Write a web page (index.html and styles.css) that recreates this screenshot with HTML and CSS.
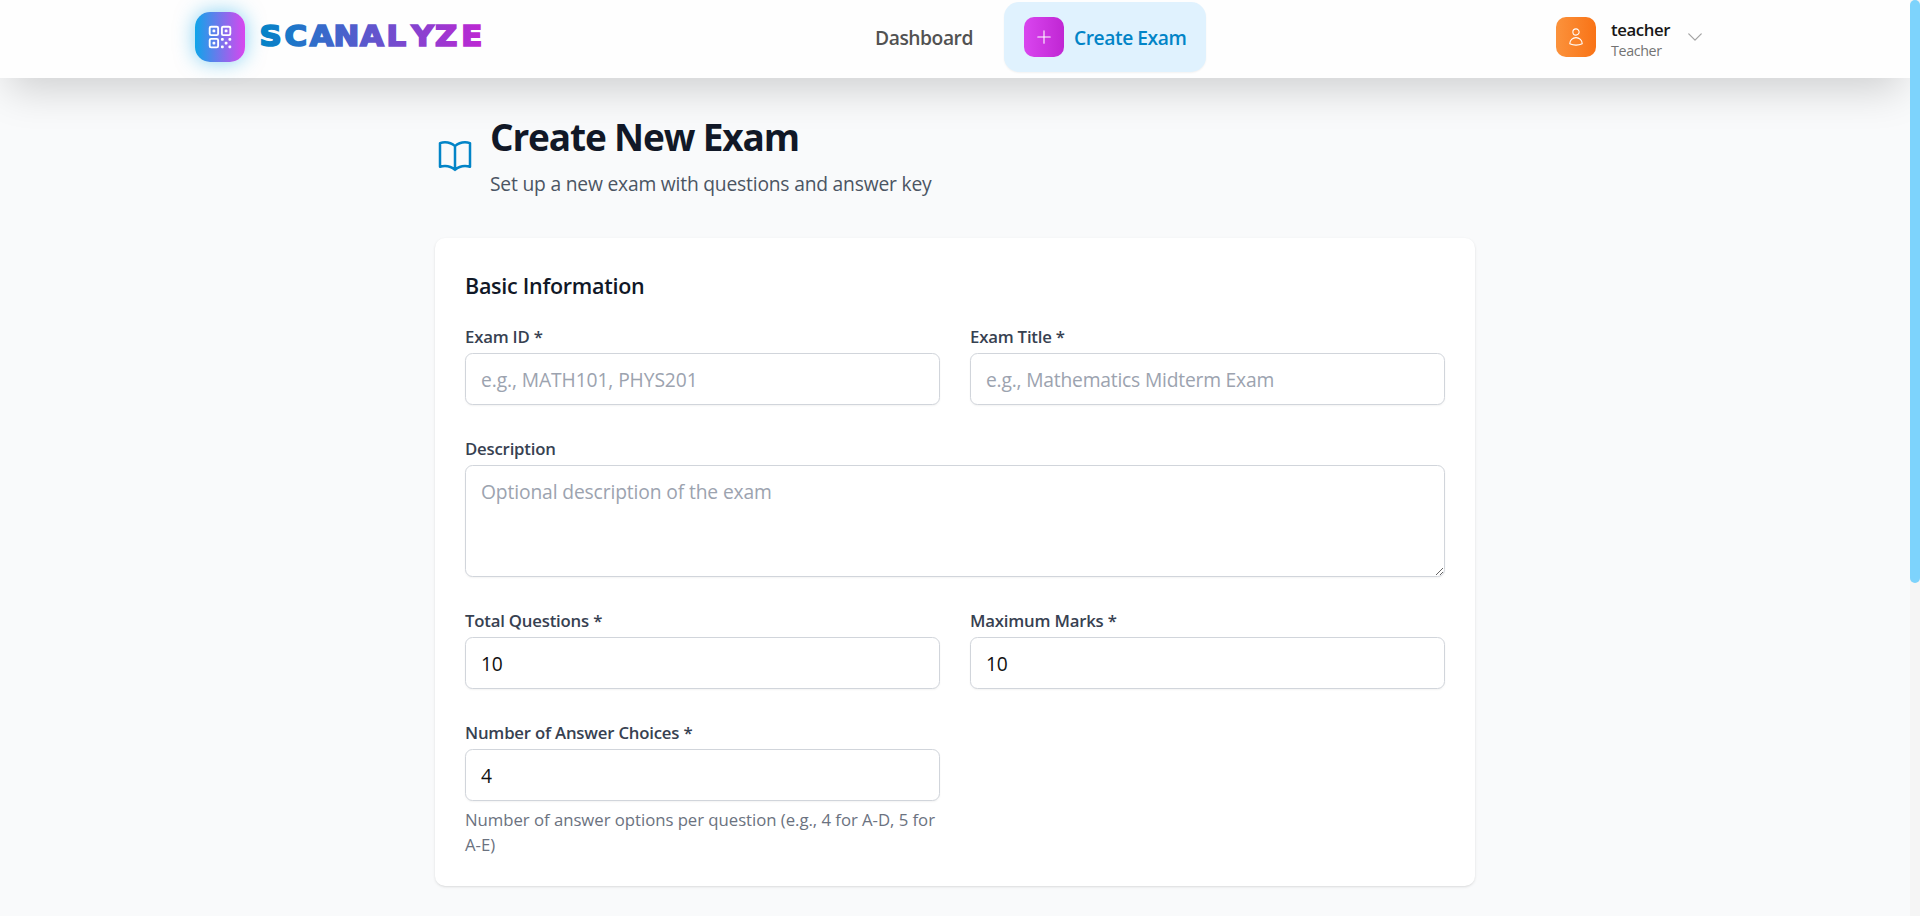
FILE: index.html
```
<!DOCTYPE html>
<html lang="en">
<head>
<meta charset="utf-8">
<title>Scanalyze</title>
<link rel="stylesheet" href="styles.css">
</head>
<body>
<div class="page">
  <header class="header">
    <div class="header-inner">
      <div class="brand">
        <span class="brand-mark">
          <svg class="icon-lg" viewBox="0 0 24 24"><path d="M3.75 4.875c0-.621.504-1.125 1.125-1.125h4.5c.621 0 1.125.504 1.125 1.125v4.5c0 .621-.504 1.125-1.125 1.125h-4.5A1.125 1.125 0 013.75 9.375v-4.5zM3.75 14.625c0-.621.504-1.125 1.125-1.125h4.5c.621 0 1.125.504 1.125 1.125v4.5c0 .621-.504 1.125-1.125 1.125h-4.5a1.125 1.125 0 01-1.125-1.125v-4.5zM13.5 4.875c0-.621.504-1.125 1.125-1.125h4.5c.621 0 1.125.504 1.125 1.125v4.5c0 .621-.504 1.125-1.125 1.125h-4.5A1.125 1.125 0 0113.5 9.375v-4.5z"/><path d="M6.75 6.75h.75v.75h-.75v-.75zM6.75 16.5h.75v.75h-.75v-.75zM16.5 6.75h.75v.75h-.75v-.75zM13.5 13.5h.75v.75h-.75v-.75zM13.5 19.5h.75v.75h-.75v-.75zM19.5 13.5h.75v.75h-.75v-.75zM19.5 19.5h.75v.75h-.75v-.75zM16.5 16.5h.75v.75h-.75v-.75z"/></svg>
        </span>
        <svg class="wordmark" viewBox="0 0 225 30">
          <defs><linearGradient id="wm" gradientUnits="userSpaceOnUse" x1="0" y1="0" x2="204" y2="0"><stop offset="0" stop-color="#0284c7"/><stop offset="1" stop-color="#c026d3"/></linearGradient></defs>
          <text class="wordmark-text" transform="scale(1.1 1)" x="-.5 22.4 45.2 66.8 91 115 137.8 159.2 183" y="26" fill="url(#wm)" stroke="url(#wm)">SCANALYZE</text>
        </svg>
      </div>
      <nav class="nav">
        <a class="nav-link">Dashboard</a>
        <a class="nav-link nav-active">
          <span class="tile tile-pink"><svg class="icon" viewBox="0 0 24 24"><path d="M12 4.5v15m7.5-7.5h-15"/></svg></span>
          <span class="nav-text">Create Exam</span>
        </a>
      </nav>
      <div class="user">
        <span class="tile tile-orange"><svg class="icon" viewBox="0 0 24 24"><path d="M15.75 6a3.75 3.75 0 11-7.5 0 3.75 3.75 0 017.5 0zM4.501 20.118a7.5 7.5 0 0114.998 0A17.933 17.933 0 0112 21.75c-2.676 0-5.216-.584-7.499-1.632z"/></svg></span>
        <div class="user-text">
          <div class="user-name">teacher</div>
          <div class="user-role">Teacher</div>
        </div>
        <svg class="icon chevron" viewBox="0 0 24 24"><path d="M19.5 8.25l-7.5 7.5-7.5-7.5"/></svg>
      </div>
    </div>
  </header>

  <main class="main">
    <div class="title-row">
      <svg class="icon-xl" viewBox="0 0 24 24"><path d="M12 6.042A8.967 8.967 0 006 3.75c-1.052 0-2.062.18-3 .512v14.25A8.987 8.987 0 016 18c2.305 0 4.408.867 6 2.292m0-14.25a8.966 8.966 0 016-2.292c1.052 0 2.062.18 3 .512v14.25A8.987 8.987 0 0018 18a8.967 8.967 0 00-6 2.292m0-14.25v14.25"/></svg>
      <div>
        <h1 class="title">Create New Exam</h1>
        <p class="subtitle">Set up a new exam with questions and answer key</p>
      </div>
    </div>

    <section class="card">
      <h2 class="card-title">Basic Information</h2>
      <div class="form-grid">
        <div class="field"><label class="label">Exam ID *</label><input class="input" placeholder="e.g., MATH101, PHYS201"></div>
        <div class="field"><label class="label">Exam Title *</label><input class="input input-title" placeholder="e.g., Mathematics Midterm Exam"></div>
        <div class="field field-wide"><label class="label">Description</label><textarea class="input textarea" placeholder="Optional description of the exam"></textarea></div>
        <div class="field"><label class="label">Total Questions *</label><input class="input number" value="10"></div>
        <div class="field"><label class="label">Maximum Marks *</label><input class="input number" value="10"></div>
        <div class="field">
          <label class="label">Number of Answer Choices *</label><input class="input number" value="4">
          <p class="help">Number of answer options per question (e.g., 4 for A-D, 5 for A-E)</p>
        </div>
      </div>
    </section>
  </main>
</div>
<div class="scroll-track"><div class="scroll-thumb"></div></div>
</body>
</html>
```
FILE: styles.css
```
* { box-sizing: border-box; }
body {
  margin: 0;
  height: 916px;
  overflow: hidden;
  display: flex;
  background: #f9fafb;
  font-family: "Open Sans", "Noto Sans", sans-serif;
  font-size: 19.25px;
  line-height: 30px;
}
h1, h2, p { margin: 0; }
svg { display: block; fill: none; stroke: currentColor; stroke-width: 1.5; stroke-linecap: round; stroke-linejoin: round; flex: none; }
.page { width: 1910px; height: 916px; background: #f9fafb; overflow: hidden; }

.header {
  height: 78px;
  padding: 0 195px 4px;
  background: #fefefe;
  box-shadow: 0 20px 40px -8px rgba(0, 0, 0, .17);
}
.header-inner { height: 74px; display: grid; grid-template-columns: 680px 681px auto; align-items: center; }
.brand { display: flex; align-items: center; gap: 15px; }
.brand-mark {
  width: 50px; height: 50px; border-radius: 15px;
  display: grid; place-items: center; color: #fff;
  background: linear-gradient(to right, #0ea5e9, #d946ef);
  box-shadow: 0 0 20px rgba(14, 165, 233, .5);
}
.icon { width: 20px; height: 20px; }
.icon-lg { width: 30px; height: 30px; }
.icon-xl { width: 40px; height: 40px; margin-top: -2px; color: #0284c7; }
.wordmark { width: 225px; height: 30px; margin-top: -4px; overflow: visible; }
.wordmark-text { font: 700 28px "DejaVu Sans", sans-serif; stroke-width: 1.7; stroke-linejoin: miter; }

.nav { display: flex; align-items: center; font-weight: 550; letter-spacing: -.45px; color: #525252; }
.nav-link { width: 129px; padding-top: 2px; white-space: nowrap; }
.nav-active {
  width: 202px; height: 70px; padding: 0 20px; border-radius: 15px;
  display: flex; align-items: center; gap: 10px;
  color: #0284c7; background: #e0f2fe; box-shadow: 0 1px 2px rgba(0, 0, 0, .05);
}
.nav-text { padding-top: 2px; }
.tile { width: 40px; height: 40px; border-radius: 10px; display: grid; place-items: center; color: #fff; flex: none; }
.tile .icon { stroke-width: 1.3; }
.tile-pink { background: linear-gradient(to right, #d946ef, #c026d3); }
.tile-orange { background: linear-gradient(to right, #fb923c, #f97316); }

.user { display: flex; align-items: center; }
.user-text { width: 74px; margin-left: 15px; padding-top: 4px; }
.user-name { font-size: 16.75px; line-height: 23px; font-weight: 600; letter-spacing: -.4px; color: #171717; }
.user-role { font-size: 14.25px; line-height: 20px; letter-spacing: -.35px; color: #737373; }
.chevron { color: #a3a3a3; }

.main { width: 1040px; margin: 0 auto; padding-top: 36px; }
.title-row { display: flex; align-items: center; gap: 15px; margin-bottom: 39px; }
.title { font-size: 37px; line-height: 45px; font-weight: 700; letter-spacing: -1.15px; color: #111827; }
.subtitle { margin-top: 10px; letter-spacing: -.2px; color: #4b5563; }

.card {
  height: 648px; padding: 30px; border-radius: 10px; background: #fff;
  box-shadow: 0 1px 3px rgba(0, 0, 0, .1), 0 1px 2px -1px rgba(0, 0, 0, .1);
}
.card-title { margin-bottom: 20px; font-size: 21.5px; line-height: 35px; font-weight: 550; letter-spacing: -.27px; color: #111827; }
.form-grid { display: grid; grid-template-columns: 1fr 1fr; gap: 30px; }
.field-wide { grid-column: span 2; }
.label { display: block; height: 30px; padding-top: 1px; font-size: 16.75px; line-height: 25px; font-weight: 550; letter-spacing: -.2px; color: #374151; }
.input {
  display: block; width: 100%; height: 52px; padding: 10px 15px;
  border: 1px solid #d1d5db; border-radius: 7.5px; background: #fff;
  font: inherit; letter-spacing: -.1px; color: #111;
  box-shadow: 0 1px 2px rgba(0, 0, 0, .05); outline: none;
}
.input::placeholder { color: #9ca3af; opacity: 1; }
.input-title { letter-spacing: -.2px; }
.textarea { height: 112px; padding-top: 11px; resize: vertical; letter-spacing: -.13px; }
.number { letter-spacing: -.3px; }
.help { margin-top: 6px; font-size: 16.75px; line-height: 25px; letter-spacing: -.04px; color: #6b7280; }

.scroll-track { width: 10px; height: 916px; background: #f5f5f5; }
.scroll-thumb { height: 583px; border-radius: 5px; background: #7dd3fc; }
```
